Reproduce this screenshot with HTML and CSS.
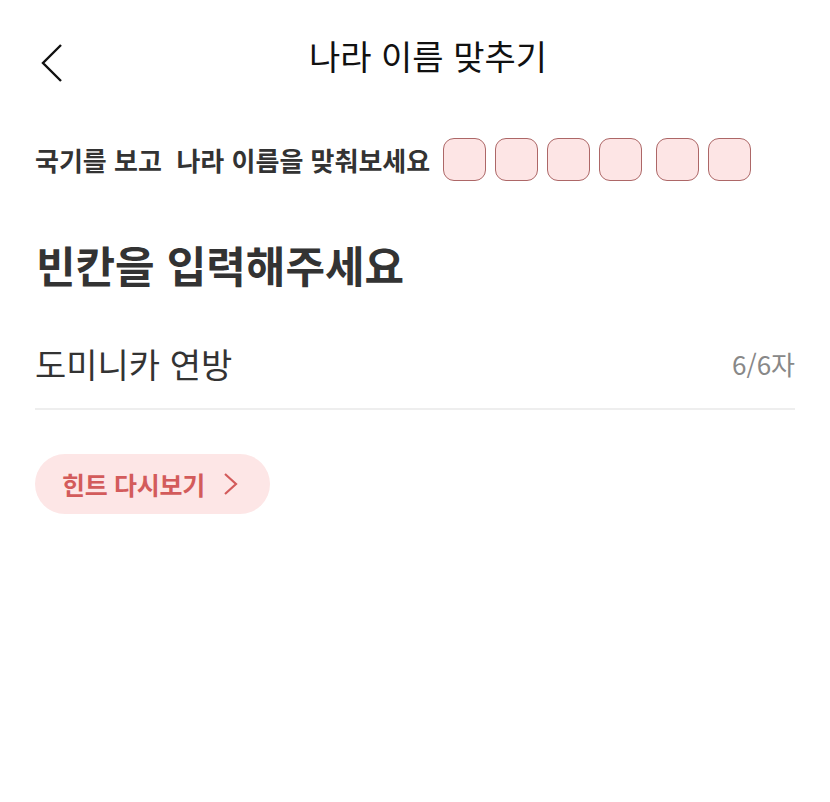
FILE: index.html
```html
<!DOCTYPE html>
<html lang="ko">
<head>
    <meta charset="utf-8">
    <title>나라 이름 맞추기</title>
    <link rel="stylesheet" href="styles.css">
</head>
<body>
    <header class="top-bar">
        <button type="button" class="back-btn" aria-label="뒤로">
            <svg width="24" height="40" viewBox="0 0 24 40"><polyline points="21,3 3,21 21,39" fill="none" stroke="#111" stroke-width="2.4"/></svg>
        </button>
        <h1 class="title">나라 이름 맞추기</h1>
    </header>

    <main class="content">
        <div class="quiz-row">
            <span class="quiz-label">국기를 보고&nbsp; 나라 이름을 맞춰보세요</span>
            <div class="slots">
                <div class="word">
                    <span class="slot"></span><span class="slot"></span><span class="slot"></span><span class="slot"></span>
                </div>
                <div class="word">
                    <span class="slot"></span><span class="slot"></span>
                </div>
            </div>
        </div>

        <h2 class="prompt">빈칸을 입력해주세요</h2>

        <div class="answer-field">
            <span class="answer-text">도미니카 연방</span>
            <span class="counter">6/6자</span>
        </div>

        <button type="button" class="hint-btn">
            힌트 다시보기
            <svg width="15" height="24" viewBox="0 0 15 24"><polyline points="2,2 13,12 2,22" fill="none" stroke="#d35b5b" stroke-width="2.2"/></svg>
        </button>
    </main>
</body>
</html>
```

FILE: styles.css
```css
body { margin: 0; background: #fff; font-family: "Noto Sans CJK KR", "Noto Sans", sans-serif; color: #333; }
.top-bar { position: relative; height: 80px; margin-top: 20px; display: flex; align-items: center; justify-content: center; }
.back-btn { position: absolute; left: 40px; top: 22px; background: none; border: none; padding: 0; cursor: pointer; }
.back-btn svg { display: block; }
.title { margin: 0 0 0 26px; font-size: 34px; font-weight: 400; color: #111; line-height: 1; position: relative; top: -4px; }

.content { padding: 0 35px; }
.quiz-row { display: flex; align-items: center; gap: 13px; margin-top: 38px; }
.quiz-label { font-size: 26px; font-weight: 700; color: #333; }
.slots { display: flex; gap: 14px; }
.word { display: flex; gap: 9px; }
.slot { width: 41px; height: 41px; border: 1.5px solid #ad6767; border-radius: 11px; background: #fde5e5; }

.prompt { margin: 58px 0 0 1px; font-size: 43px; font-weight: 700; color: #333; line-height: 1.2; }

.answer-field { display: flex; justify-content: space-between; align-items: center; margin-top: 48px; padding-bottom: 20px; border-bottom: 2px solid #eee; }
.answer-text { font-size: 34px; color: #333; }
.counter { font-size: 26px; color: #888; }

.hint-btn { display: inline-flex; align-items: center; gap: 18px; margin-top: 44px; height: 60px; padding: 0 32px 0 27px; border: none; border-radius: 30px; background: #fde6e6; color: #d35b5b; font-family: inherit; font-size: 25px; font-weight: 700; letter-spacing: -0.3px; cursor: pointer; }
```
